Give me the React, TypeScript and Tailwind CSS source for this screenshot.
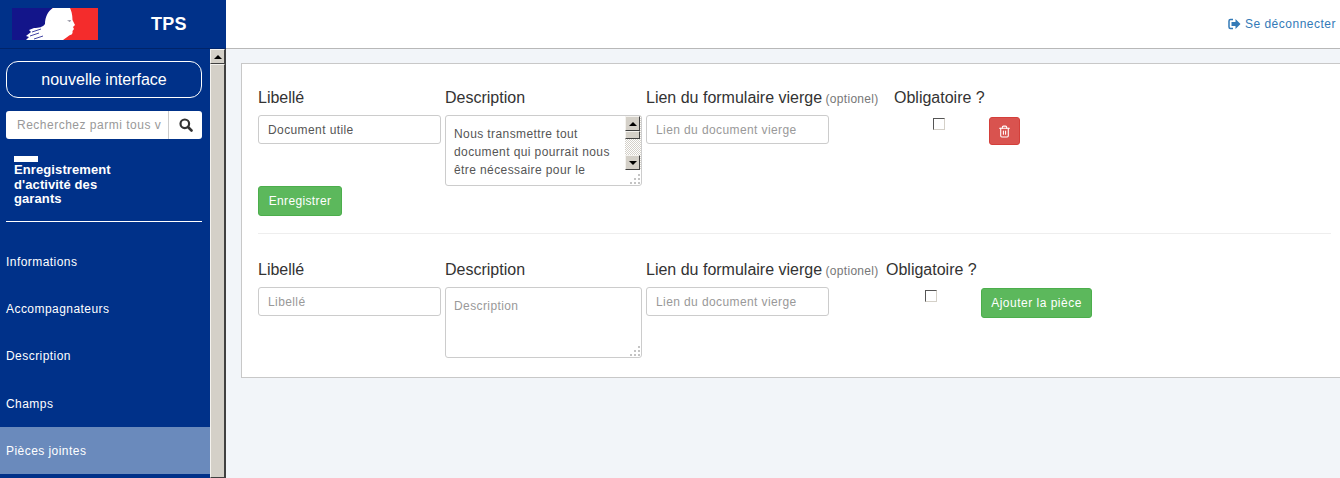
import { Trash2 } from "lucide-react";

const NAV = ["Informations", "Accompagnateurs", "Description", "Champs", "Pièces jointes"];

function Logo() {
  return (
    <svg width="86" height="32" viewBox="0 0 86 32" className="block">
      <rect width="41" height="32" fill="#13158a" />
      <rect x="40" width="46" height="32" fill="#f42c2c" />
      <path
        d="M41 0 C36 3 33 9 33 16 C31 19 27 20 22 20 L17 22 L19 24 L14 28 L17 29 L14 32 L51 32 C54 30 56 28 58 27 C60 27 61 25 60.500 23 L62 21 L61 19 L63 17 L60.500 12 C60.500 6 59 2 58 0 Z"
        fill="#ffffff"
      />
      <path d="M20 24 L29 21 M18 28 L27 25 M22 31 L31 28" stroke="#13158a" strokeWidth="0.800" fill="none" />
      <path d="M55 12.500 L59 12 L58 14 Z" fill="#8a8a9a" />
    </svg>
  );
}

function SignOutIcon() {
  return (
    <svg width="13" height="12" viewBox="0 0 13 12" className="mr-[4px] block">
      <path d="M5 1.500 H2.500 Q1 1.500 1 3 V9 Q1 10.500 2.500 10.500 H5" stroke="#337ab7" strokeWidth="1.500" fill="none" />
      <path d="M3.500 4 H7.500 V1 L12.500 6 L7.500 11 V8 H3.500 Z" fill="#337ab7" />
    </svg>
  );
}

function SearchIcon() {
  return (
    <svg width="14" height="14" viewBox="0 0 14 14" className="block">
      <circle cx="5.800" cy="5.800" r="4.300" stroke="#333333" strokeWidth="2.200" fill="none" />
      <path d="M9 9 L12.500 12.500" stroke="#333333" strokeWidth="2.600" strokeLinecap="round" />
    </svg>
  );
}

function ArrowBtn({ up }: { up: boolean }) {
  return (
    <div className="flex h-[15px] w-[15px] shrink-0 items-center justify-center border border-t-[#f4f2ee] border-l-[#f4f2ee] border-r-[#404040] border-b-[#404040] bg-[#d4d0c8]">
      <div
        className={
          up
            ? "h-0 w-0 border-x-[4px] border-b-[4px] border-x-transparent border-b-black"
            : "h-0 w-0 border-x-[4px] border-t-[4px] border-x-transparent border-t-black"
        }
      />
    </div>
  );
}

function Field({ placeholder, value }: { placeholder: string; value?: string }) {
  return (
    <div
      className={`flex h-[29px] w-[183px] items-center rounded-[3px] border border-[#cccccc] bg-white pl-[9px] text-[12px] tracking-[0.4px] ${
        value ? "text-[#555555]" : "text-[#999999]"
      }`}
    >
      {value ?? placeholder}
    </div>
  );
}

function Grip() {
  return (
    <svg width="12" height="12" viewBox="0 0 12 12" className="absolute right-0 bottom-0">
      <g fill="#c4c4c4">
        <rect x="9" y="1" width="2" height="2" />
        <rect x="5" y="5" width="2" height="2" />
        <rect x="9" y="5" width="2" height="2" />
        <rect x="1" y="9" width="2" height="2" />
        <rect x="5" y="9" width="2" height="2" />
        <rect x="9" y="9" width="2" height="2" />
      </g>
    </svg>
  );
}

function PieceRow({
  filled,
  lienWidth,
  action,
}: {
  filled: boolean;
  lienWidth: string;
  action: React.ReactNode;
}) {
  return (
    <div className="flex">
      <div className="mr-1 w-[183px] shrink-0">
        <div className="mb-[7px] text-[16px] leading-[20px] text-[#333333]">Libellé</div>
        <Field placeholder="Libellé" value={filled ? "Document utile" : undefined} />
      </div>
      <div className="mr-1 w-[197px] shrink-0">
        <div className="mb-[7px] text-[16px] leading-[20px] text-[#333333]">Description</div>
        <div className="relative h-[71px] rounded-[3px] border border-[#cccccc] bg-white pt-[9px] pl-[8px] text-[12px] leading-[18px] tracking-[0.4px]">
          {filled ? (
            <>
              <div className="text-[#555555]">
                Nous transmettre tout
                <br />
                document qui pourrait nous
                <br />
                être nécessaire pour le
              </div>
              <div className="absolute top-0 right-0 flex h-[54px] w-[16px] flex-col bg-[repeating-conic-gradient(#d4d0c8_0_25%,#ffffff_0_50%)] bg-[length:2px_2px]">
                <ArrowBtn up />
                <div className="h-[8px] w-[15px] border border-t-[#f4f2ee] border-l-[#f4f2ee] border-r-[#404040] border-b-[#404040] bg-[#d4d0c8]" />
                <div className="flex-1" />
                <ArrowBtn up={false} />
              </div>
            </>
          ) : (
            <div className="text-[#999999]">Description</div>
          )}
          <Grip />
        </div>
      </div>
      <div className={`shrink-0 ${lienWidth}`}>
        <div className="mb-[7px] h-[20px] text-[16px] leading-[20px] text-[#333333]">
          Lien du formulaire vierge{" "}
          <span className="-ml-px text-[12px] leading-none tracking-[0.3px] text-[#777777]">(optionel)</span>
        </div>
        <Field placeholder="Lien du document vierge" />
      </div>
      <div className="shrink-0">
        <div className="text-[16px] leading-[20px] text-[#333333]">Obligatoire ?</div>
        <div className="mt-[7px] flex items-start">
          <div className="mt-[3px] ml-[39px] h-[12px] w-[12px] border border-t-[#555555] border-l-[#555555] border-r-[#d4d0c8] border-b-[#d4d0c8] bg-white" />
          {action}
        </div>
      </div>
    </div>
  );
}

export default function App() {
  return (
    <div className="flex h-[478px] w-[1340px] flex-col overflow-hidden bg-[#f2f5f9] font-['Liberation_Sans',Arial,sans-serif]">
      <header className="flex h-[49px] shrink-0 border-b border-b-[#b8b8b8] bg-white">
        <div className="-mb-px flex w-[226px] shrink-0 items-center border-b border-b-[#00246a] bg-[#003189] pl-[12px]">
          <Logo />
          <span className="ml-[53px] text-[18px] font-bold tracking-[0.3px] text-white">TPS</span>
        </div>
        <div className="flex flex-1 items-center justify-end pr-[4px] text-[12px] tracking-[0.5px] text-[#337ab7]">
          <SignOutIcon />
          Se déconnecter
        </div>
      </header>
      <div className="flex min-h-0 flex-1">
        <aside className="flex w-[226px] shrink-0 border-r border-r-[#404040]">
          <div className="w-[210px] shrink-0 bg-[#003189] text-white">
            <div className="pt-[12px] pr-[8px] pl-[6px]">
              <div className="flex h-[37px] items-center justify-center rounded-[12px] border border-white text-[16px]">
                nouvelle interface
              </div>
              <div className="mt-[13px] flex h-[28px]">
                <div className="flex w-[163px] items-center rounded-l-[3px] border-r border-r-[#cccccc] bg-white pl-[11px] text-[12px] tracking-[0.5px] whitespace-nowrap text-[#999999]">
                  Recherchez parmi tous v
                </div>
                <div className="flex w-[33px] items-center justify-center rounded-r-[3px] bg-white">
                  <SearchIcon />
                </div>
              </div>
              <div className="mt-[17px] ml-[8px] h-[6px] w-[24px] bg-white" />
              <div className="mt-px ml-[8px] w-[110px] text-[13px] leading-[14.500px] font-bold tracking-[0.1px]">
                Enregistrement d'activité des garants
              </div>
              <div className="mt-[14px] h-px bg-white" />
            </div>
            <nav className="mt-[17px]">
              {NAV.map((item) => (
                <div
                  key={item}
                  className={`flex h-[47.200px] items-center pl-[6px] text-[12px] tracking-[0.45px] ${
                    item === "Pièces jointes" ? "bg-[#6a8abc]" : ""
                  }`}
                >
                  {item}
                </div>
              ))}
            </nav>
          </div>
          <div className="flex w-[15px] flex-col bg-[#d4d0c8]">
            <ArrowBtn up />
            <div className="h-full border border-t-[#f4f2ee] border-l-[#f4f2ee] border-r-[#404040] border-b-[#404040] bg-[#d4d0c8]" />
          </div>
        </aside>
        <main className="min-w-0 flex-1 pt-[14px] pl-[15px]">
          <div className="h-[315px] border border-r-0 border-[#c8c8c8] bg-white pt-[24px] pl-[16px]">
            <PieceRow
              filled
              lienWidth="w-[248px]"
              action={
                <div className="mt-[2px] ml-[44px] flex h-[28px] w-[31px] items-center justify-center rounded-[3px] border border-[#d43f3a] bg-[#d9534f] text-white">
                  <Trash2 size={13} />
                </div>
              }
            />
            <div className="flex h-[30px] w-[84px] items-center justify-center rounded-[3px] border border-[#4cae4c] bg-[#5cb85c] text-[12px] tracking-[0.35px] text-white">
              Enregistrer
            </div>
            <div className="mt-[17px] mr-[9px] mb-[26px] h-px bg-[#eeeeee]" />
            <PieceRow
              filled={false}
              lienWidth="w-[240px]"
              action={
                <div className="mt-[1px] ml-[44px] flex h-[30px] w-[111px] items-center justify-center rounded-[3px] border border-[#4cae4c] bg-[#5cb85c] text-[12px] tracking-[0.5px] text-white">
                  Ajouter la pièce
                </div>
              }
            />
          </div>
        </main>
      </div>
    </div>
  );
}
